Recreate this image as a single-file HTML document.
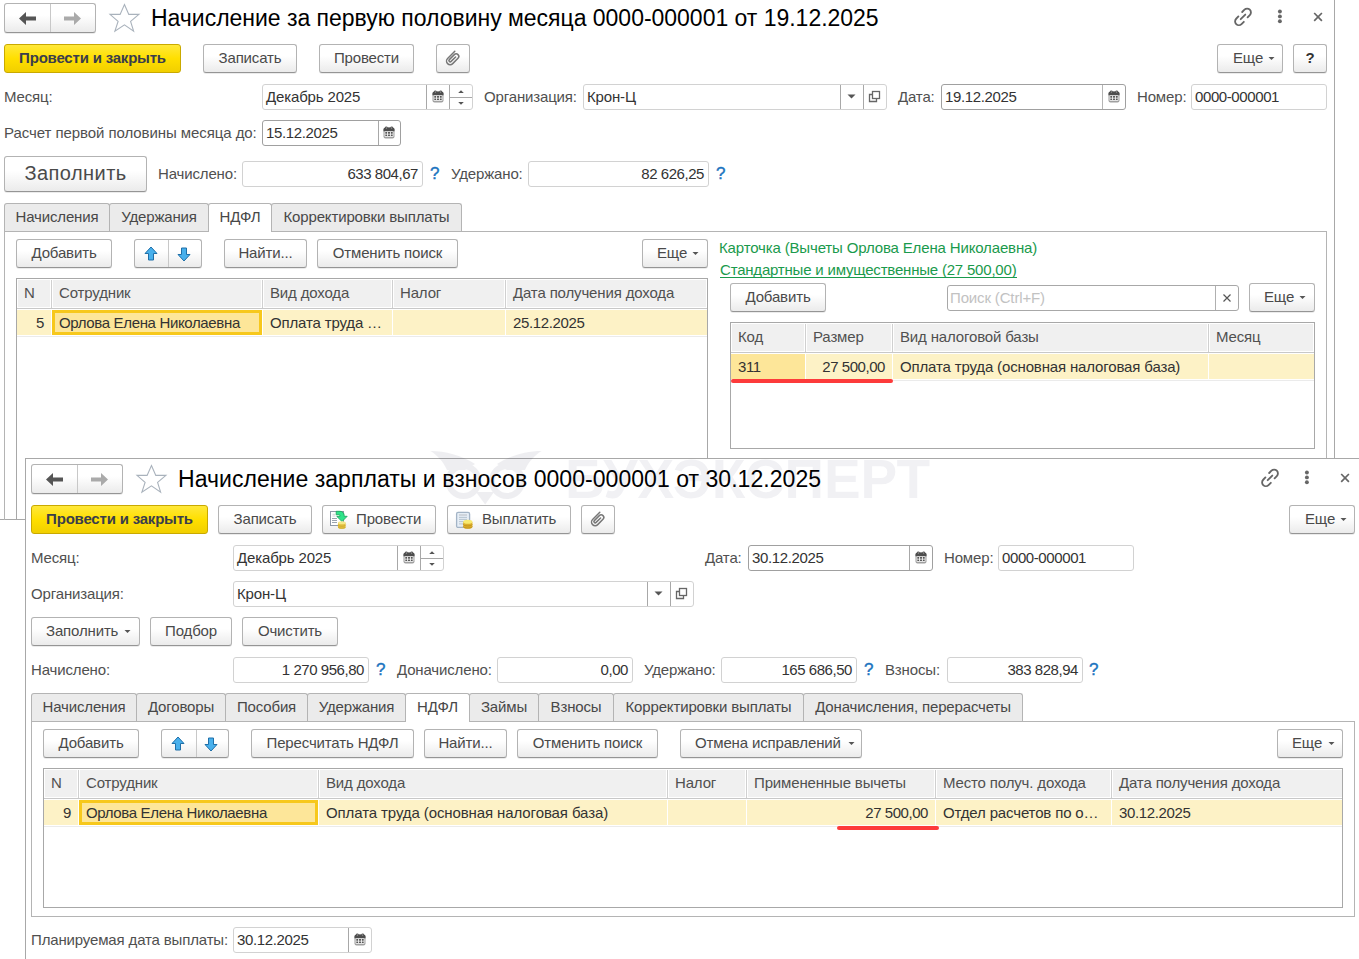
<!DOCTYPE html>
<html><head><meta charset="utf-8">
<style>
html,body{margin:0;padding:0;}
body{width:1359px;height:959px;overflow:hidden;position:relative;background:#fff;font-family:"Liberation Sans",sans-serif;font-size:15px;color:#333;}
div,span{box-sizing:border-box;}
.a{position:absolute;}
.t{position:absolute;white-space:nowrap;line-height:17px;letter-spacing:-0.15px;}
.l{position:absolute;white-space:nowrap;line-height:17px;color:#505050;letter-spacing:-0.15px;}
.b{position:absolute;height:29px;border:1px solid #b3b3b3;border-bottom-color:#959595;border-radius:3px;background:linear-gradient(#fff 0%,#fff 40%,#ebebeb 100%);color:#4a4a4a;text-align:center;line-height:26px;white-space:nowrap;box-shadow:0 1px 0 rgba(0,0,0,0.08);letter-spacing:-0.15px;}
.yb{position:absolute;height:29px;border:1px solid #c9a900;border-radius:3px;background:linear-gradient(#ffe83a 0%,#ffdf00 50%,#f1cf00 100%);color:#3a3d4c;text-align:center;line-height:25px;white-space:nowrap;font-weight:bold;letter-spacing:-0.2px;}
.i{position:absolute;height:26px;border:1px solid #d2d2d2;border-radius:3px;background:#fff;color:#333;line-height:24px;white-space:nowrap;overflow:hidden;}
.i .tx{position:absolute;left:3px;top:0;letter-spacing:-0.15px;}
.i .num{position:absolute;right:4px;top:0;letter-spacing:-0.45px;}
.dv{position:absolute;top:0;bottom:0;width:1px;background:#a8a8a8;}
.hl{position:absolute;height:1px;background:#a0a0a0;}
.vl{position:absolute;width:1px;background:#a0a0a0;}
.tab{position:absolute;height:29px;border:1px solid #b4b4b4;border-bottom:none;border-radius:3px 3px 0 0;background:#ebebeb;color:#484848;text-align:center;line-height:25px;white-space:nowrap;letter-spacing:-0.15px;}
.tab.act{background:#fff;height:29px;}
.q{position:absolute;color:#1c74c0;font-size:17px;line-height:17px;-webkit-text-stroke:0.4px #1c74c0;}
.th{position:absolute;background:#f0f0f0;color:#505050;line-height:17px;white-space:nowrap;letter-spacing:-0.15px;}
.cal{position:absolute;width:11px;height:11px;}
svg{position:absolute;overflow:visible;}
</style></head><body>

<!-- ============ WINDOW 1 ============ -->
<div class="a" style="left:0;top:0;width:1359px;height:520px;overflow:hidden">
<div class="vl" style="left:1334px;top:0;height:520px;background:#a8a8a8"></div>
<div class="hl" style="left:0;top:519px;width:1335px;background:#a8a8a8"></div>

<!-- nav buttons -->
<div class="b" style="left:4px;top:3px;width:92px;height:30px;"></div>
<div class="a" style="left:50px;top:4px;width:1px;height:28px;background:#c8c8c8"></div>
<svg style="left:0;top:0" width="100" height="40"><path d="M19 18.5 L26 12 L26 16.5 L36 16.5 L36 20.5 L26 20.5 L26 25 Z" fill="#555"/><path d="M81 18.5 L74 12 L74 16.5 L64 16.5 L64 20.5 L74 20.5 L74 25 Z" fill="#aaa"/></svg>
<!-- star -->
<svg style="left:104px;top:0px" width="40" height="36"><path d="M20.45 4.5 L24.8 14.4 L34.9 14.4 L26.6 21.4 L29.6 31.1 L20.45 24.8 L10.9 31.1 L14.1 21.4 L6 14.4 L16.1 14.4 Z" fill="none" stroke="#a9b2bc" stroke-width="1.1" stroke-linejoin="miter"/></svg>
<div class="t" style="left:151px;top:5px;font-size:23px;line-height:26px;color:#000;letter-spacing:-0.02px">Начисление за первую половину месяца 0000-000001 от 19.12.2025</div>
<!-- title icons -->
<svg style="left:1228px;top:2px" width="30" height="30"><g transform="translate(15 14.9) scale(0.92) translate(-15 -15)"><path d="M14.1 9.7 L16.6 7.2 A4.1 4.1 0 0 1 22.4 13 L20 15.5 M15.9 20.3 L13.4 22.8 A4.1 4.1 0 0 1 7.6 17 L10 14.5 M12.5 17.5 L17.5 12.5" fill="none" stroke="#666" stroke-width="2" stroke-linecap="round"/></g></svg>
<svg style="left:1270px;top:4px" width="20" height="26"><circle cx="9.9" cy="7.5" r="1.95" fill="#666"/><circle cx="9.9" cy="12.4" r="1.95" fill="#666"/><circle cx="9.9" cy="17.2" r="1.95" fill="#666"/></svg>
<svg style="left:1310px;top:8px" width="20" height="20"><path d="M4.2 5 L11.9 12.8 M11.9 5 L4.2 12.8" stroke="#666" stroke-width="1.7"/></svg>

<!-- command bar -->
<div class="yb" style="left:4px;top:44px;width:177px;">Провести и закрыть</div>
<div class="b" style="left:203px;top:44px;width:94px;">Записать</div>
<div class="b" style="left:319px;top:44px;width:95px;">Провести</div>
<div class="b" style="left:436px;top:44px;width:34px;"></div>
<svg style="left:436px;top:44px" width="34" height="29"><path d="M18.8 7.3 L11.6 14.5 A3.6 3.6 0 0 0 16.7 19.6 L22 14.3 A2.6 2.6 0 0 0 18.3 10.6 L13.3 15.6 A1.27 1.27 0 0 0 15.1 17.4 L19.6 13" fill="none" stroke="#777" stroke-width="1.5" stroke-linecap="round"/></svg>
<div class="b" style="left:1217px;top:44px;width:66px;"><span style="position:absolute;left:15px">Еще</span></div>
<svg style="left:1268px;top:57px" width="8" height="4"><path d="M0.5 0 L6.5 0 L3.5 3Z" fill="#555"/></svg>
<div class="b" style="left:1293px;top:44px;width:34px;font-weight:bold;color:#333">?</div>

<!-- row: month -->
<div class="l" style="left:4px;top:88px">Месяц:</div>
<div class="i" style="left:262px;top:84px;width:211px;"><span class="tx">Декабрь 2025</span>
  <div class="dv" style="left:163px"></div><div class="dv" style="left:186px"></div>
</div>
<svg style="left:432px;top:90px" width="12" height="13"><rect x="0.5" y="1.5" width="11" height="11" rx="2" fill="#a0a0a0"/><path d="M0.5 3.5 a2 2 0 0 1 2 -2 h7 a2 2 0 0 1 2 2 v1.8 h-11z" fill="#4d4d4d"/><circle cx="3.3" cy="1.7" r="1.3" fill="#4d4d4d"/><circle cx="8.7" cy="1.7" r="1.3" fill="#4d4d4d"/><circle cx="3.3" cy="1.9" r="0.5" fill="#ddd"/><circle cx="8.7" cy="1.9" r="0.5" fill="#ddd"/><rect x="1.6" y="5.4" width="8.8" height="5.3" fill="#fff"/><path d="M2.3 6.1h1.9v1.7h-1.9z M5.05 6.1h1.9v1.7h-1.9z M7.8 6.1h1.9v1.7h-1.9z M2.3 8.6h1.9v1.5h-1.9z M5.05 8.6h1.9v1.5h-1.9z M7.8 8.6h1.9v1.5h-1.9z" fill="#555"/></svg>
<div class="a" style="left:449px;top:97px;width:23px;height:1px;background:#a8a8a8"></div>
<svg style="left:456px;top:88px" width="10" height="20"><path d="M2.2 5 L5 2.2 L7.8 5Z M2.2 14 L5 16.8 L7.8 14Z" fill="#555"/></svg>

<div class="l" style="left:484px;top:88px">Организация:</div>
<div class="i" style="left:583px;top:84px;width:304px;"><span class="tx">Крон-Ц</span>
  <div class="dv" style="left:256px"></div><div class="dv" style="left:279px"></div>
</div>
<svg style="left:846px;top:93px" width="12" height="8"><path d="M1.5 1.5 L9.5 1.5 L5.5 5.5Z" fill="#555"/></svg>
<svg style="left:868px;top:90px" width="14" height="14"><path d="M4.5 4.5 H1.5 V11.5 H8.5 V8.5" fill="none" stroke="#666" stroke-width="1.3"/><rect x="4.5" y="1.5" width="7" height="7" fill="none" stroke="#666" stroke-width="1.3"/></svg>

<div class="l" style="left:898px;top:88px">Дата:</div>
<div class="i" style="left:941px;top:84px;width:185px;border-color:#a0a0a0"><span class="tx" style="letter-spacing:-0.37px">19.12.2025</span>
  <div class="dv" style="left:160px;background:#b5b5b5"></div>
</div>
<svg style="left:1108px;top:90px" width="12" height="13"><rect x="0.5" y="1.5" width="11" height="11" rx="2" fill="#a0a0a0"/><path d="M0.5 3.5 a2 2 0 0 1 2 -2 h7 a2 2 0 0 1 2 2 v1.8 h-11z" fill="#4d4d4d"/><circle cx="3.3" cy="1.7" r="1.3" fill="#4d4d4d"/><circle cx="8.7" cy="1.7" r="1.3" fill="#4d4d4d"/><circle cx="3.3" cy="1.9" r="0.5" fill="#ddd"/><circle cx="8.7" cy="1.9" r="0.5" fill="#ddd"/><rect x="1.6" y="5.4" width="8.8" height="5.3" fill="#fff"/><path d="M2.3 6.1h1.9v1.7h-1.9z M5.05 6.1h1.9v1.7h-1.9z M7.8 6.1h1.9v1.7h-1.9z M2.3 8.6h1.9v1.5h-1.9z M5.05 8.6h1.9v1.5h-1.9z M7.8 8.6h1.9v1.5h-1.9z" fill="#555"/></svg>
<div class="l" style="left:1137px;top:88px">Номер:</div>
<div class="i" style="left:1191px;top:84px;width:136px;"><span class="tx" style="letter-spacing:-0.4px">0000-000001</span></div>

<!-- row: расчет -->
<div class="l" style="left:4px;top:124px;letter-spacing:-0.07px">Расчет первой половины месяца до:</div>
<div class="i" style="left:262px;top:120px;width:139px;border-color:#a0a0a0"><span class="tx" style="letter-spacing:-0.37px">15.12.2025</span>
  <div class="dv" style="left:115px"></div>
</div>
<svg style="left:383px;top:126px" width="12" height="13"><rect x="0.5" y="1.5" width="11" height="11" rx="2" fill="#a0a0a0"/><path d="M0.5 3.5 a2 2 0 0 1 2 -2 h7 a2 2 0 0 1 2 2 v1.8 h-11z" fill="#4d4d4d"/><circle cx="3.3" cy="1.7" r="1.3" fill="#4d4d4d"/><circle cx="8.7" cy="1.7" r="1.3" fill="#4d4d4d"/><circle cx="3.3" cy="1.9" r="0.5" fill="#ddd"/><circle cx="8.7" cy="1.9" r="0.5" fill="#ddd"/><rect x="1.6" y="5.4" width="8.8" height="5.3" fill="#fff"/><path d="M2.3 6.1h1.9v1.7h-1.9z M5.05 6.1h1.9v1.7h-1.9z M7.8 6.1h1.9v1.7h-1.9z M2.3 8.6h1.9v1.5h-1.9z M5.05 8.6h1.9v1.5h-1.9z M7.8 8.6h1.9v1.5h-1.9z" fill="#555"/></svg>

<!-- row: заполнить -->
<div class="b" style="left:4px;top:156px;width:143px;height:36px;font-size:20px;line-height:32px;letter-spacing:0.45px">Заполнить</div>
<div class="l" style="left:158px;top:165px">Начислено:</div>
<div class="i" style="left:242px;top:161px;width:181px;"><span class="num">633 804,67</span></div>
<div class="q" style="left:430px;top:165px">?</div>
<div class="l" style="left:451px;top:165px">Удержано:</div>
<div class="i" style="left:528px;top:161px;width:181px;"><span class="num">82 626,25</span></div>
<div class="q" style="left:716px;top:165px">?</div>

<!-- tabs -->
<div class="a" style="left:4px;top:231px;width:1323px;height:400px;border:1px solid #b4b4b4;border-bottom:none"></div>
<div class="tab" style="left:4px;top:203px;width:106px;height:28px">Начисления</div>
<div class="tab" style="left:109px;top:203px;width:100px;height:28px">Удержания</div>
<div class="tab act" style="left:208px;top:203px;width:64px;height:29px">НДФЛ</div>
<div class="tab" style="left:271px;top:203px;width:191px;height:28px">Корректировки выплаты</div>
<div class="a" style="left:209px;top:231px;width:62px;height:1px;background:#fff"></div>

<!-- panel toolbar -->
<div class="b" style="left:16px;top:239px;width:96px;">Добавить</div>
<div class="b" style="left:134px;top:239px;width:68px;"></div>
<div class="a" style="left:168px;top:240px;width:1px;height:27px;background:#c8c8c8"></div>
<svg style="left:141px;top:244px" width="20" height="20"><path d="M10 3 L16 9.5 L12.5 9.5 L12.5 16 L7.5 16 L7.5 9.5 L4 9.5Z" fill="#48b0ec" stroke="#1f6fa8" stroke-width="1" stroke-linejoin="round"/></svg>
<svg style="left:174px;top:244px" width="20" height="20"><path d="M10 17 L16 10.5 L12.5 10.5 L12.5 4 L7.5 4 L7.5 10.5 L4 10.5Z" fill="#48b0ec" stroke="#1f6fa8" stroke-width="1" stroke-linejoin="round"/></svg>
<div class="b" style="left:224px;top:239px;width:83px;">Найти...</div>
<div class="b" style="left:317px;top:239px;width:141px;">Отменить поиск</div>
<div class="b" style="left:642px;top:239px;width:66px;"><span style="position:absolute;left:14px">Еще</span></div>
<svg style="left:692px;top:252px" width="8" height="4"><path d="M0.5 0 L6.5 0 L3.5 3Z" fill="#555"/></svg>

<!-- table 1 -->
<div class="a" style="left:16px;top:278px;width:692px;height:300px;border:1px solid #a8a8a8;border-bottom:none"></div>
<div class="th" style="left:18px;top:280px;width:32px;height:27px;padding:4px 0 0 6px">N</div>
<div class="th" style="left:53px;top:280px;width:208px;height:27px;padding:4px 0 0 6px">Сотрудник</div>
<div class="th" style="left:264px;top:280px;width:127px;height:27px;padding:4px 0 0 6px">Вид дохода</div>
<div class="th" style="left:394px;top:280px;width:110px;height:27px;padding:4px 0 0 6px">Налог</div>
<div class="th" style="left:507px;top:280px;width:199px;height:27px;padding:4px 0 0 6px">Дата получения дохода</div>
<div class="a" style="left:51px;top:280px;width:1px;height:28px;background:#d0d0d0"></div>
<div class="a" style="left:262px;top:280px;width:1px;height:28px;background:#d0d0d0"></div>
<div class="a" style="left:392px;top:280px;width:1px;height:28px;background:#d0d0d0"></div>
<div class="a" style="left:505px;top:280px;width:1px;height:28px;background:#d0d0d0"></div>
<div class="a" style="left:17px;top:308px;width:690px;height:1px;background:#c8c8c8"></div>
<div class="a" style="left:17px;top:310px;width:690px;height:25px;background:#fdf2c6"></div>
<div class="a" style="left:17px;top:336px;width:690px;height:1px;background:#ebebeb"></div>
<div class="a" style="left:51px;top:309px;width:1px;height:27px;background:#fff"></div>
<div class="a" style="left:262px;top:309px;width:1px;height:27px;background:#fff"></div>
<div class="a" style="left:392px;top:309px;width:1px;height:27px;background:#fff"></div>
<div class="a" style="left:505px;top:309px;width:1px;height:27px;background:#fff"></div>
<div class="a" style="left:52px;top:310px;width:210px;height:25px;border:3px solid #f7c81c;background:#fde699"></div>
<div class="t" style="left:36px;top:314px">5</div>
<div class="t" style="left:59px;top:314px;letter-spacing:-0.35px">Орлова Елена Николаевна</div>
<div class="t" style="left:270px;top:314px">Оплата труда …</div>
<div class="t" style="left:513px;top:314px;letter-spacing:-0.37px">25.12.2025</div>

<!-- right panel -->
<div class="t" style="left:719px;top:239px;color:#1a9a4c">Карточка (Вычеты Орлова Елена Николаевна)</div>
<div class="t" style="left:720px;top:261px;color:#1a9a4c;letter-spacing:-0.2px">Стандартные и имущественные (27 500,00)</div>
<div class="a" style="left:720px;top:277px;width:297px;height:1px;background:#1a9a4c"></div>
<div class="b" style="left:730px;top:283px;width:96px;">Добавить</div>
<div class="i" style="left:947px;top:285px;width:292px;border-color:#a8a8a8"><span class="tx" style="color:#c2c2c2;left:2px">Поиск (Ctrl+F)</span>
  <div class="dv" style="left:267px;background:#b0b0b0"></div>
</div>
<svg style="left:1221px;top:292px" width="12" height="12"><path d="M2.5 2.5 L9.5 9.5 M9.5 2.5 L2.5 9.5" stroke="#555" stroke-width="1.2"/></svg>
<div class="b" style="left:1249px;top:283px;width:66px;"><span style="position:absolute;left:14px">Еще</span></div>
<svg style="left:1299px;top:296px" width="8" height="4"><path d="M0.5 0 L6.5 0 L3.5 3Z" fill="#555"/></svg>

<div class="a" style="left:730px;top:322px;width:585px;height:127px;border:1px solid #a8a8a8"></div>
<div class="th" style="left:732px;top:324px;width:72px;height:27px;padding:4px 0 0 6px">Код</div>
<div class="th" style="left:807px;top:324px;width:84px;height:27px;padding:4px 0 0 6px">Размер</div>
<div class="th" style="left:894px;top:324px;width:313px;height:27px;padding:4px 0 0 6px">Вид налоговой базы</div>
<div class="th" style="left:1210px;top:324px;width:103px;height:27px;padding:4px 0 0 6px">Месяц</div>
<div class="a" style="left:805px;top:324px;width:1px;height:28px;background:#d0d0d0"></div>
<div class="a" style="left:892px;top:324px;width:1px;height:28px;background:#d0d0d0"></div>
<div class="a" style="left:1208px;top:324px;width:1px;height:28px;background:#d0d0d0"></div>
<div class="a" style="left:731px;top:352px;width:583px;height:1px;background:#c8c8c8"></div>
<div class="a" style="left:731px;top:354px;width:583px;height:25px;background:#fdf2c6"></div>
<div class="a" style="left:731px;top:380px;width:583px;height:1px;background:#ebebeb"></div>
<div class="a" style="left:731px;top:354px;width:74px;height:25px;background:#fde699"></div>
<div class="a" style="left:805px;top:353px;width:1px;height:27px;background:#fff"></div>
<div class="a" style="left:892px;top:353px;width:1px;height:27px;background:#fff"></div>
<div class="a" style="left:1208px;top:353px;width:1px;height:27px;background:#fff"></div>
<div class="t" style="left:738px;top:358px;letter-spacing:-0.37px">311</div>
<div class="t" style="left:820px;top:358px;width:65px;text-align:right;letter-spacing:-0.45px">27 500,00</div>
<div class="t" style="left:900px;top:358px">Оплата труда (основная налоговая база)</div>
<div class="a" style="left:731px;top:379px;width:162px;height:4px;border-radius:2px;background:#fd3b3b"></div>

</div>
<!-- ============ WATERMARK ============ -->

<!-- ============ WINDOW 2 ============ -->
<div class="a" style="left:25px;top:458px;width:1340px;height:520px;border:1px solid #a8a8a8;background:#fff"></div>
<!-- nav buttons -->
<div class="b" style="left:31px;top:464px;width:92px;height:30px;"></div>
<div class="a" style="left:77px;top:465px;width:1px;height:28px;background:#c8c8c8"></div>
<svg style="left:27px;top:461px" width="100" height="40"><path d="M19 18.5 L26 12 L26 16.5 L36 16.5 L36 20.5 L26 20.5 L26 25 Z" fill="#555"/><path d="M81 18.5 L74 12 L74 16.5 L64 16.5 L64 20.5 L74 20.5 L74 25 Z" fill="#aaa"/></svg>
<svg style="left:131px;top:461px" width="40" height="36"><path d="M20.45 4.5 L24.8 14.4 L34.9 14.4 L26.6 21.4 L29.6 31.1 L20.45 24.8 L10.9 31.1 L14.1 21.4 L6 14.4 L16.1 14.4 Z" fill="none" stroke="#a9b2bc" stroke-width="1.1" stroke-linejoin="miter"/></svg>
<div class="t" style="left:178px;top:466px;font-size:23px;line-height:26px;color:#000;letter-spacing:0.045px">Начисление зарплаты и взносов 0000-000001 от 30.12.2025</div>
<svg style="left:1255px;top:463px" width="30" height="30"><g transform="translate(15 14.9) scale(0.92) translate(-15 -15)"><path d="M14.1 9.7 L16.6 7.2 A4.1 4.1 0 0 1 22.4 13 L20 15.5 M15.9 20.3 L13.4 22.8 A4.1 4.1 0 0 1 7.6 17 L10 14.5 M12.5 17.5 L17.5 12.5" fill="none" stroke="#666" stroke-width="2" stroke-linecap="round"/></g></svg>
<svg style="left:1297px;top:465px" width="20" height="26"><circle cx="9.9" cy="7.5" r="1.95" fill="#666"/><circle cx="9.9" cy="12.4" r="1.95" fill="#666"/><circle cx="9.9" cy="17.2" r="1.95" fill="#666"/></svg>
<svg style="left:1337px;top:469px" width="20" height="20"><path d="M4.2 5 L11.9 12.8 M11.9 5 L4.2 12.8" stroke="#666" stroke-width="1.7"/></svg>

<!-- command bar -->
<div class="yb" style="left:31px;top:505px;width:177px;">Провести и закрыть</div>
<div class="b" style="left:218px;top:505px;width:94px;">Записать</div>
<div class="b" style="left:322px;top:505px;width:114px;"><span style="position:absolute;left:33px">Провести</span></div>
<svg style="left:326px;top:506px" width="26" height="26"><rect x="4.5" y="5.5" width="13" height="14" fill="#fff" stroke="#8e99a8" stroke-width="1"/><path d="M6.5 8.3h3 M6.5 10h3" stroke="#d0d4da" stroke-width="1"/><path d="M6 12.5h5 M6 14.5h5 M6 16.5h5" stroke="#9aa4b0" stroke-width="1"/><path d="M10.2 5.3 h3.8 a4.2 4.2 0 0 1 4.2 4.2 v0.8 h3 l-5.2 5.3 l-5.3 -5.3 h3.2 v-0.6 a1 1 0 0 0 -1 -1 h-2.7z" fill="#2fe38a" stroke="#16a058" stroke-width="0.8"/><path d="M12 16.8 v4.4 a3.8 1.6 0 0 0 7.6 0 v-4.4z" fill="#e2c040"/><ellipse cx="15.8" cy="16.8" rx="3.8" ry="1.5" fill="#f6e88a"/><path d="M12 18.8 a3.8 1.5 0 0 0 7.6 0 M12 20.8 a3.8 1.5 0 0 0 7.6 0" fill="none" stroke="#c9a52a" stroke-width="0.7"/></svg>
<div class="b" style="left:447px;top:505px;width:124px;"><span style="position:absolute;left:34px">Выплатить</span></div>
<svg style="left:452px;top:506px" width="26" height="26"><rect x="4.6" y="6.4" width="13" height="15" rx="1.5" fill="#e6eef6" stroke="#a3b4c6" stroke-width="1.3"/><path d="M7 9h8" stroke="#cfd5dc" stroke-width="2"/><path d="M7 11.4h8 M7 13.4h8 M7 15.6h8 M7 17.9h6" stroke="#b0bfcc" stroke-width="0.9"/><path d="M11.2 16 v5 a4.6 1.8 0 0 0 9.2 0 v-5z" fill="#dcae2a"/><ellipse cx="15.8" cy="15.8" rx="4.6" ry="2" fill="#f8ea70"/><path d="M11.2 18.2 a4.6 1.8 0 0 0 9.2 0 M11.2 20.3 a4.6 1.8 0 0 0 9.2 0" fill="none" stroke="#b98a18" stroke-width="0.7"/></svg>
<div class="b" style="left:581px;top:505px;width:34px;"></div>
<svg style="left:581px;top:505px" width="34" height="29"><path d="M18.8 7.3 L11.6 14.5 A3.6 3.6 0 0 0 16.7 19.6 L22 14.3 A2.6 2.6 0 0 0 18.3 10.6 L13.3 15.6 A1.27 1.27 0 0 0 15.1 17.4 L19.6 13" fill="none" stroke="#777" stroke-width="1.5" stroke-linecap="round"/></svg>
<div class="b" style="left:1289px;top:505px;width:66px;"><span style="position:absolute;left:15px">Еще</span></div>
<svg style="left:1340px;top:518px" width="8" height="4"><path d="M0.5 0 L6.5 0 L3.5 3Z" fill="#555"/></svg>

<!-- month row -->
<div class="l" style="left:31px;top:549px">Месяц:</div>
<div class="i" style="left:233px;top:545px;width:211px;"><span class="tx">Декабрь 2025</span>
  <div class="dv" style="left:163px"></div><div class="dv" style="left:186px"></div>
</div>
<svg style="left:403px;top:551px" width="12" height="13"><rect x="0.5" y="1.5" width="11" height="11" rx="2" fill="#a0a0a0"/><path d="M0.5 3.5 a2 2 0 0 1 2 -2 h7 a2 2 0 0 1 2 2 v1.8 h-11z" fill="#4d4d4d"/><circle cx="3.3" cy="1.7" r="1.3" fill="#4d4d4d"/><circle cx="8.7" cy="1.7" r="1.3" fill="#4d4d4d"/><circle cx="3.3" cy="1.9" r="0.5" fill="#ddd"/><circle cx="8.7" cy="1.9" r="0.5" fill="#ddd"/><rect x="1.6" y="5.4" width="8.8" height="5.3" fill="#fff"/><path d="M2.3 6.1h1.9v1.7h-1.9z M5.05 6.1h1.9v1.7h-1.9z M7.8 6.1h1.9v1.7h-1.9z M2.3 8.6h1.9v1.5h-1.9z M5.05 8.6h1.9v1.5h-1.9z M7.8 8.6h1.9v1.5h-1.9z" fill="#555"/></svg>
<div class="a" style="left:420px;top:558px;width:23px;height:1px;background:#a8a8a8"></div>
<svg style="left:427px;top:549px" width="10" height="20"><path d="M2.2 5 L5 2.2 L7.8 5Z M2.2 14 L5 16.8 L7.8 14Z" fill="#555"/></svg>
<div class="l" style="left:705px;top:549px">Дата:</div>
<div class="i" style="left:748px;top:545px;width:185px;border-color:#a0a0a0"><span class="tx" style="letter-spacing:-0.37px">30.12.2025</span>
  <div class="dv" style="left:160px;background:#a8a8a8"></div>
</div>
<svg style="left:915px;top:551px" width="12" height="13"><rect x="0.5" y="1.5" width="11" height="11" rx="2" fill="#a0a0a0"/><path d="M0.5 3.5 a2 2 0 0 1 2 -2 h7 a2 2 0 0 1 2 2 v1.8 h-11z" fill="#4d4d4d"/><circle cx="3.3" cy="1.7" r="1.3" fill="#4d4d4d"/><circle cx="8.7" cy="1.7" r="1.3" fill="#4d4d4d"/><circle cx="3.3" cy="1.9" r="0.5" fill="#ddd"/><circle cx="8.7" cy="1.9" r="0.5" fill="#ddd"/><rect x="1.6" y="5.4" width="8.8" height="5.3" fill="#fff"/><path d="M2.3 6.1h1.9v1.7h-1.9z M5.05 6.1h1.9v1.7h-1.9z M7.8 6.1h1.9v1.7h-1.9z M2.3 8.6h1.9v1.5h-1.9z M5.05 8.6h1.9v1.5h-1.9z M7.8 8.6h1.9v1.5h-1.9z" fill="#555"/></svg>
<div class="l" style="left:944px;top:549px">Номер:</div>
<div class="i" style="left:998px;top:545px;width:136px;"><span class="tx" style="letter-spacing:-0.4px">0000-000001</span></div>

<!-- org row -->
<div class="l" style="left:31px;top:585px">Организация:</div>
<div class="i" style="left:233px;top:581px;width:461px;"><span class="tx">Крон-Ц</span>
  <div class="dv" style="left:413px"></div><div class="dv" style="left:436px"></div>
</div>
<svg style="left:653px;top:590px" width="12" height="8"><path d="M1.5 1.5 L9.5 1.5 L5.5 5.5Z" fill="#555"/></svg>
<svg style="left:675px;top:587px" width="14" height="14"><path d="M4.5 4.5 H1.5 V11.5 H8.5 V8.5" fill="none" stroke="#666" stroke-width="1.3"/><rect x="4.5" y="1.5" width="7" height="7" fill="none" stroke="#666" stroke-width="1.3"/></svg>

<!-- buttons row -->
<div class="b" style="left:31px;top:617px;width:109px;"><span style="position:absolute;left:14px">Заполнить</span></div>
<svg style="left:124px;top:630px" width="8" height="4"><path d="M0.5 0 L6.5 0 L3.5 3Z" fill="#555"/></svg>
<div class="b" style="left:150px;top:617px;width:82px;">Подбор</div>
<div class="b" style="left:242px;top:617px;width:96px;">Очистить</div>

<!-- amounts row -->
<div class="l" style="left:31px;top:661px">Начислено:</div>
<div class="i" style="left:233px;top:657px;width:136px;"><span class="num">1 270 956,80</span></div>
<div class="q" style="left:376px;top:661px">?</div>
<div class="l" style="left:397px;top:661px">Доначислено:</div>
<div class="i" style="left:497px;top:657px;width:136px;"><span class="num">0,00</span></div>
<div class="l" style="left:644px;top:661px">Удержано:</div>
<div class="i" style="left:721px;top:657px;width:136px;"><span class="num">165 686,50</span></div>
<div class="q" style="left:864px;top:661px">?</div>
<div class="l" style="left:885px;top:661px">Взносы:</div>
<div class="i" style="left:947px;top:657px;width:136px;"><span class="num">383 828,94</span></div>
<div class="q" style="left:1089px;top:661px">?</div>

<!-- tabs -->
<div class="a" style="left:31px;top:721px;width:1324px;height:196px;border:1px solid #b4b4b4;"></div>
<div class="tab" style="left:31px;top:693px;width:106px;height:28px">Начисления</div>
<div class="tab" style="left:136px;top:693px;width:90px;height:28px">Договоры</div>
<div class="tab" style="left:225px;top:693px;width:83px;height:28px">Пособия</div>
<div class="tab" style="left:307px;top:693px;width:99px;height:28px">Удержания</div>
<div class="tab act" style="left:405px;top:693px;width:65px;height:29px">НДФЛ</div>
<div class="tab" style="left:469px;top:693px;width:70px;height:28px">Займы</div>
<div class="tab" style="left:538px;top:693px;width:76px;height:28px">Взносы</div>
<div class="tab" style="left:613px;top:693px;width:191px;height:28px">Корректировки выплаты</div>
<div class="tab" style="left:803px;top:693px;width:220px;height:28px">Доначисления, перерасчеты</div>
<div class="a" style="left:406px;top:721px;width:63px;height:1px;background:#fff"></div>

<!-- toolbar -->
<div class="b" style="left:43px;top:729px;width:96px;">Добавить</div>
<div class="b" style="left:161px;top:729px;width:68px;"></div>
<div class="a" style="left:196px;top:730px;width:1px;height:27px;background:#c8c8c8"></div>
<svg style="left:168px;top:734px" width="20" height="20"><path d="M10 3 L16 9.5 L12.5 9.5 L12.5 16 L7.5 16 L7.5 9.5 L4 9.5Z" fill="#48b0ec" stroke="#1f6fa8" stroke-width="1" stroke-linejoin="round"/></svg>
<svg style="left:201px;top:734px" width="20" height="20"><path d="M10 17 L16 10.5 L12.5 10.5 L12.5 4 L7.5 4 L7.5 10.5 L4 10.5Z" fill="#48b0ec" stroke="#1f6fa8" stroke-width="1" stroke-linejoin="round"/></svg>
<div class="b" style="left:251px;top:729px;width:163px;">Пересчитать НДФЛ</div>
<div class="b" style="left:424px;top:729px;width:83px;">Найти...</div>
<div class="b" style="left:517px;top:729px;width:141px;">Отменить поиск</div>
<div class="b" style="left:680px;top:729px;width:182px;"><span style="position:absolute;left:14px">Отмена исправлений</span></div>
<svg style="left:848px;top:742px" width="8" height="4"><path d="M0.5 0 L6.5 0 L3.5 3Z" fill="#555"/></svg>
<div class="b" style="left:1277px;top:729px;width:66px;"><span style="position:absolute;left:14px">Еще</span></div>
<svg style="left:1328px;top:742px" width="8" height="4"><path d="M0.5 0 L6.5 0 L3.5 3Z" fill="#555"/></svg>

<!-- table 2 -->
<div class="a" style="left:43px;top:768px;width:1300px;height:140px;border:1px solid #a8a8a8;"></div>
<div class="th" style="left:45px;top:770px;width:32px;height:27px;padding:4px 0 0 6px">N</div>
<div class="th" style="left:80px;top:770px;width:237px;height:27px;padding:4px 0 0 6px">Сотрудник</div>
<div class="th" style="left:320px;top:770px;width:346px;height:27px;padding:4px 0 0 6px">Вид дохода</div>
<div class="th" style="left:669px;top:770px;width:76px;height:27px;padding:4px 0 0 6px">Налог</div>
<div class="th" style="left:748px;top:770px;width:186px;height:27px;padding:4px 0 0 6px">Примененные вычеты</div>
<div class="th" style="left:937px;top:770px;width:173px;height:27px;padding:4px 0 0 6px">Место получ. дохода</div>
<div class="th" style="left:1113px;top:770px;width:229px;height:27px;padding:4px 0 0 6px">Дата получения дохода</div>
<div class="a" style="left:78px;top:770px;width:1px;height:28px;background:#d0d0d0"></div>
<div class="a" style="left:318px;top:770px;width:1px;height:28px;background:#d0d0d0"></div>
<div class="a" style="left:667px;top:770px;width:1px;height:28px;background:#d0d0d0"></div>
<div class="a" style="left:746px;top:770px;width:1px;height:28px;background:#d0d0d0"></div>
<div class="a" style="left:935px;top:770px;width:1px;height:28px;background:#d0d0d0"></div>
<div class="a" style="left:1111px;top:770px;width:1px;height:28px;background:#d0d0d0"></div>
<div class="a" style="left:44px;top:798px;width:1298px;height:1px;background:#c8c8c8"></div>
<div class="a" style="left:44px;top:800px;width:1298px;height:25px;background:#fdf2c6"></div>
<div class="a" style="left:44px;top:826px;width:1298px;height:1px;background:#ebebeb"></div>
<div class="a" style="left:78px;top:799px;width:1px;height:27px;background:#fff"></div>
<div class="a" style="left:318px;top:799px;width:1px;height:27px;background:#fff"></div>
<div class="a" style="left:667px;top:799px;width:1px;height:27px;background:#fff"></div>
<div class="a" style="left:746px;top:799px;width:1px;height:27px;background:#fff"></div>
<div class="a" style="left:935px;top:799px;width:1px;height:27px;background:#fff"></div>
<div class="a" style="left:1111px;top:799px;width:1px;height:27px;background:#fff"></div>
<div class="a" style="left:79px;top:800px;width:239px;height:25px;border:3px solid #f7c81c;background:#fde699"></div>
<div class="t" style="left:63px;top:804px">9</div>
<div class="t" style="left:86px;top:804px;letter-spacing:-0.35px">Орлова Елена Николаевна</div>
<div class="t" style="left:326px;top:804px;letter-spacing:-0.1px">Оплата труда (основная налоговая база)</div>
<div class="t" style="left:850px;top:804px;width:78px;text-align:right;letter-spacing:-0.45px">27 500,00</div>
<div class="t" style="left:943px;top:804px">Отдел расчетов по о…</div>
<div class="t" style="left:1119px;top:804px;letter-spacing:-0.37px">30.12.2025</div>
<div class="a" style="left:837px;top:826px;width:102px;height:4px;border-radius:2px;background:#fd3b3b"></div>

<!-- planned date -->
<div class="l" style="left:31px;top:931px">Планируемая дата выплаты:</div>
<div class="i" style="left:233px;top:927px;width:139px;"><span class="tx" style="letter-spacing:-0.37px">30.12.2025</span>
  <div class="dv" style="left:114px"></div>
</div>
<svg style="left:354px;top:933px" width="12" height="13"><rect x="0.5" y="1.5" width="11" height="11" rx="2" fill="#a0a0a0"/><path d="M0.5 3.5 a2 2 0 0 1 2 -2 h7 a2 2 0 0 1 2 2 v1.8 h-11z" fill="#4d4d4d"/><circle cx="3.3" cy="1.7" r="1.3" fill="#4d4d4d"/><circle cx="8.7" cy="1.7" r="1.3" fill="#4d4d4d"/><circle cx="3.3" cy="1.9" r="0.5" fill="#ddd"/><circle cx="8.7" cy="1.9" r="0.5" fill="#ddd"/><rect x="1.6" y="5.4" width="8.8" height="5.3" fill="#fff"/><path d="M2.3 6.1h1.9v1.7h-1.9z M5.05 6.1h1.9v1.7h-1.9z M7.8 6.1h1.9v1.7h-1.9z M2.3 8.6h1.9v1.5h-1.9z M5.05 8.6h1.9v1.5h-1.9z M7.8 8.6h1.9v1.5h-1.9z" fill="#555"/></svg>
<!-- watermark overlay -->
<div class="t" style="left:565px;top:452px;font-size:55px;line-height:55px;font-weight:bold;color:rgba(20,20,60,0.06);letter-spacing:0px">БУХЭКСПЕРТ</div>
<svg style="left:425px;top:446px" width="124" height="62"><g opacity="0.065"><g fill="#14143c"><path d="M5.5 5 C20 5 36 9 50 18 L40 24 L22 24 C18 15 12 9 5.5 5 Z M116.5 5 C102 5 86 9 72 18 L82 24 L100 24 C104 15 110 9 116.5 5 Z M51 46 L69 46 L60.2 58.4 Z"/></g><g fill="none" stroke="#14143c" stroke-width="6"><circle cx="38.5" cy="35" r="15"/><circle cx="82" cy="35" r="15"/></g></g></svg>
</body></html>
